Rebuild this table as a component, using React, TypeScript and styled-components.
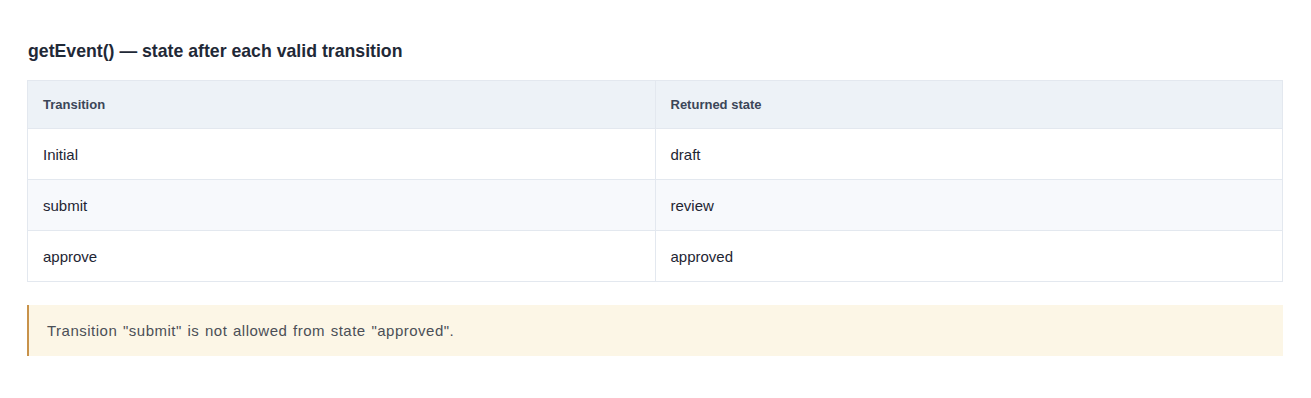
import React from 'react';
import styled, { createGlobalStyle } from 'styled-components';

const GlobalStyle = createGlobalStyle`
  body {
    margin: 0;
    background: #ffffff;
    font-family: "Liberation Sans", Arial, sans-serif;
  }
`;

const Page = styled.div`
  padding: 41px 28px 0 27px;
`;

const Title = styled.h3`
  margin: 0 0 19px 1px;
  font-size: 17.7px;
  line-height: 20px;
  font-weight: 700;
  color: #1f2937;
`;

const Table = styled.table`
  width: 100%;
  border-collapse: collapse;
  border: 1px solid #e3e8ef;
`;

const HeadCell = styled.th`
  text-align: left;
  padding: 0 15px;
  height: 48px;
  box-sizing: border-box;
  font-size: 13px;
  font-weight: 700;
  color: #3b4658;
  background: #edf2f7;
  border: 1px solid #e3e8ef;
  width: 50%;
`;

const Row = styled.tr<{ $alt?: boolean }>`
  background: ${p => (p.$alt ? '#f7f9fc' : '#ffffff')};
`;

const Cell = styled.td`
  padding: 0 15px;
  height: 51px;
  box-sizing: border-box;
  font-size: 15px;
  color: #1e2533;
  border: 1px solid #e3e8ef;
`;

const Alert = styled.div`
  margin-top: 23px;
  height: 51px;
  display: flex;
  align-items: center;
  padding-left: 18px;
  background: #fcf6e6;
  border-left: 2px solid #c8924a;
  font-size: 15px;
  letter-spacing: 0.5px;
  word-spacing: 1px;
  color: #4b4f56;
`;

const rows = [
  { transition: 'Initial', state: 'draft' },
  { transition: 'submit', state: 'review' },
  { transition: 'approve', state: 'approved' },
];

const App: React.FC = () => {
  return (
    <Page>
      <GlobalStyle />
      <Title>getEvent() — state after each valid transition</Title>
      <Table>
        <thead>
          <tr>
            <HeadCell>Transition</HeadCell>
            <HeadCell>Returned state</HeadCell>
          </tr>
        </thead>
        <tbody>
          {rows.map((row, i) => (
            <Row key={row.transition} $alt={i % 2 === 1}>
              <Cell>{row.transition}</Cell>
              <Cell>{row.state}</Cell>
            </Row>
          ))}
        </tbody>
      </Table>
      <Alert>Transition "submit" is not allowed from state "approved".</Alert>
    </Page>
  );
};

export default App;
